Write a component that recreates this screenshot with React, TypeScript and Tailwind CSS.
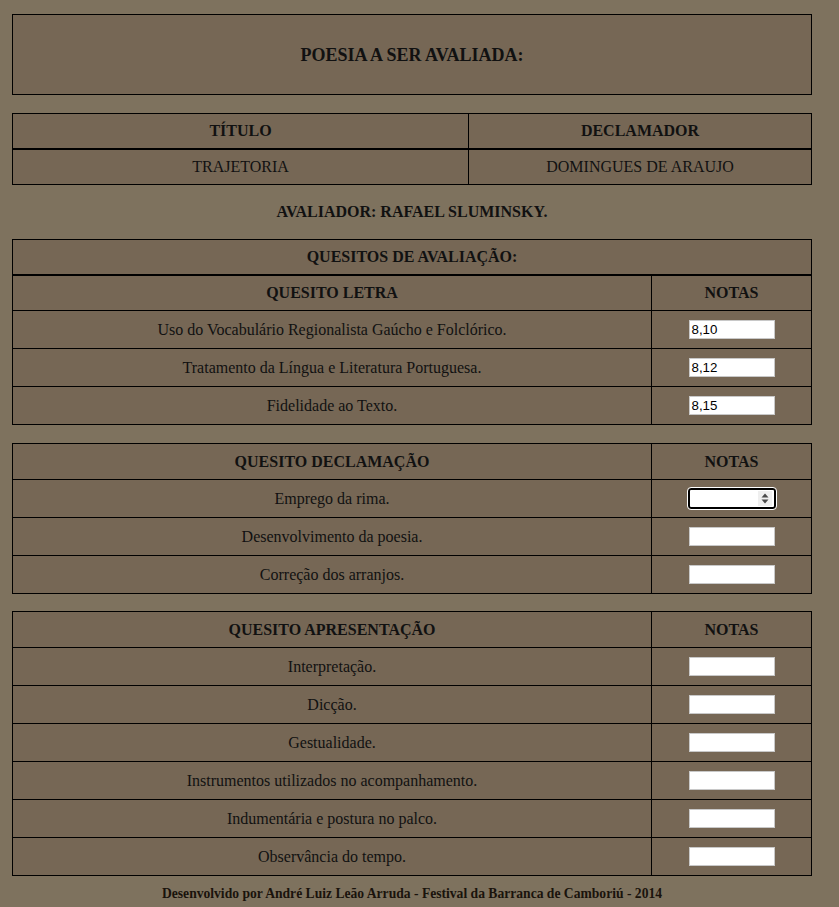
import React from "react";

type Row = { label: string; value?: string; focused?: boolean };

function NoteInput({ value, focused }: { value?: string; focused?: boolean }) {
  if (focused) {
    return (
      <div className="relative w-[88px] h-[21px] rounded-[3px] bg-white border-2 border-black outline outline-1 outline-white flex items-center justify-end pr-[2px]">
        <div className="w-[14px] h-[15px] bg-[#efefef] flex items-center justify-center">
          <svg width="8" height="11" viewBox="0 0 8 11">
            <path d="M4 0.5 L7.5 4.5 L0.5 4.5 Z" fill="#4a4a4a" />
            <path d="M4 10.5 L7.5 6.5 L0.5 6.5 Z" fill="#4a4a4a" />
          </svg>
        </div>
      </div>
    );
  }
  return (
    <div className="w-[86px] h-[19px] bg-white border border-[#c8c8c8] flex items-center pl-[2px] [font-family:Liberation_Sans,Arial,sans-serif] text-[13.3px] text-black leading-none">
      {value}
    </div>
  );
}

function Section({ title, rows, top }: { title: string; rows: Row[]; top?: React.ReactNode }) {
  return (
    <div className="border border-black bg-[#766755]">
      {top}
      <div className={`grid grid-cols-[638px_1fr] ${top ? "h-[35px]" : "h-[36px]"} border-b border-black font-bold`}>
        <div className="flex items-center justify-center">{title}</div>
        <div className="flex items-center justify-center border-l border-black">NOTAS</div>
      </div>
      {rows.map((r, i) => (
        <div
          key={r.label}
          className={`grid grid-cols-[638px_1fr] ${i < rows.length - 1 ? "h-[38px] border-b border-black" : "h-[37px]"}`}
        >
          <div className="flex items-center justify-center">{r.label}</div>
          <div className="flex items-center justify-center border-l border-black">
            <NoteInput value={r.value} focused={r.focused} />
          </div>
        </div>
      ))}
    </div>
  );
}

export default function App() {
  const letra: Row[] = [
    { label: "Uso do Vocabulário Regionalista Gaúcho e Folclórico.", value: "8,10" },
    { label: "Tratamento da Língua e Literatura Portuguesa.", value: "8,12" },
    { label: "Fidelidade ao Texto.", value: "8,15" },
  ];
  const declamacao: Row[] = [
    { label: "Emprego da rima.", focused: true },
    { label: "Desenvolvimento da poesia." },
    { label: "Correção dos arranjos." },
  ];
  const apresentacao: Row[] = [
    { label: "Interpretação." },
    { label: "Dicção." },
    { label: "Gestualidade." },
    { label: "Instrumentos utilizados no acompanhamento." },
    { label: "Indumentária e postura no palco." },
    { label: "Observância do tempo." },
  ];

  return (
    <div className="min-h-[907px] bg-[#7e725e] [font-family:Liberation_Serif,Times_New_Roman,serif] text-[16px] text-[#111] leading-none">
      <div className="w-[800px] ml-[12px] pt-[14px]">
        <div className="h-[81px] border border-black bg-[#766755] flex items-center justify-center font-bold text-[18px]">
          POESIA A SER AVALIADA:
        </div>

        <div className="mt-[18px] border border-black bg-[#766755]">
          <div className="grid grid-cols-[455px_1fr] h-[36px] border-b-2 border-black font-bold">
            <div className="flex items-center justify-center">TÍTULO</div>
            <div className="flex items-center justify-center border-l border-black">DECLAMADOR</div>
          </div>
          <div className="grid grid-cols-[455px_1fr] h-[34px]">
            <div className="flex items-center justify-center">TRAJETORIA</div>
            <div className="flex items-center justify-center border-l border-black">DOMINGUES DE ARAUJO</div>
          </div>
        </div>

        <div className="h-[54px] flex items-center justify-center font-bold">AVALIADOR: RAFAEL SLUMINSKY.</div>

        <Section
          title="QUESITO LETRA"
          rows={letra}
          top={
            <div className="h-[36px] border-b-2 border-black flex items-center justify-center font-bold">
              QUESITOS DE AVALIAÇÃO:
            </div>
          }
        />

        <div className="mt-[18px]">
          <Section title="QUESITO DECLAMAÇÃO" rows={declamacao} />
        </div>

        <div className="mt-[17px]">
          <Section title="QUESITO APRESENTAÇÃO" rows={apresentacao} />
        </div>

        <div className="h-[36px] flex items-center justify-center font-bold text-[13.6px] text-[#1a130c]">
          Desenvolvido por André Luiz Leão Arruda - Festival da Barranca de Camboriú - 2014
        </div>
      </div>
    </div>
  );
}
